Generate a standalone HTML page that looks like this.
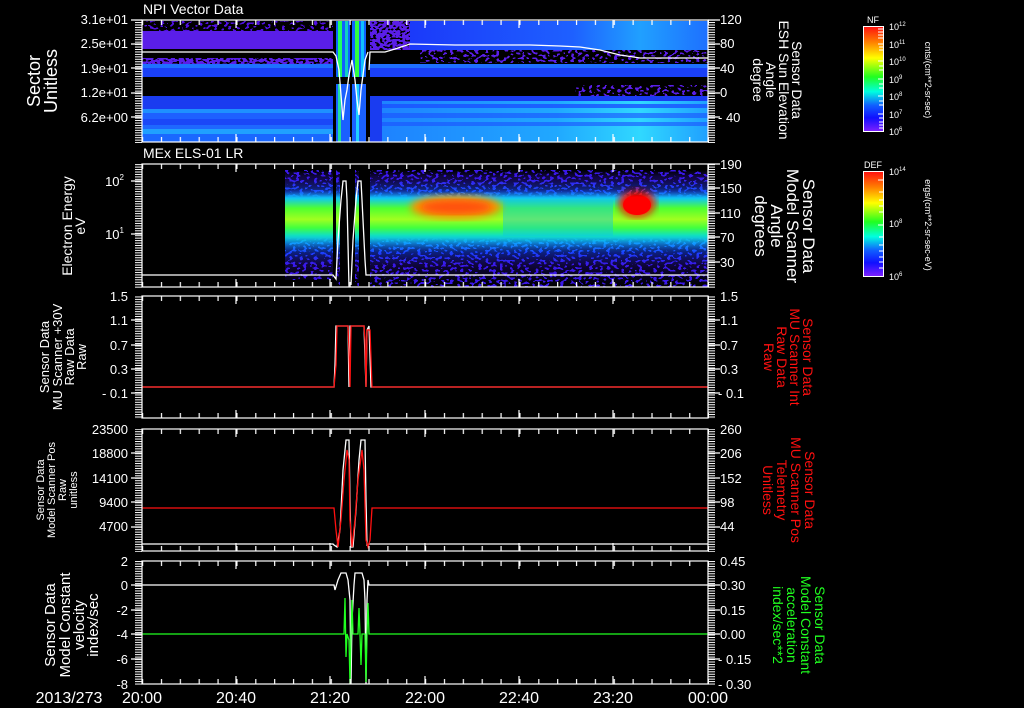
<!DOCTYPE html>
<html><head><meta charset="utf-8">
<style>
html,body{margin:0;padding:0;background:#000;}
svg{display:block;}
text{font-family:"Liberation Sans",sans-serif;fill:#fff;}
</style></head>
<body>
<svg width="1024" height="708" viewBox="0 0 1024 708" xmlns="http://www.w3.org/2000/svg">
<defs>
  <filter id="spk" x="0" y="0" width="100%" height="100%">
    <feTurbulence type="fractalNoise" baseFrequency="0.28 0.4" numOctaves="1" seed="3"/>
    <feComponentTransfer><feFuncA type="discrete" tableValues="0 0 0 1 1 1 1"/></feComponentTransfer>
    <feColorMatrix type="matrix" values="0 0 0 0 0  0 0 0 0 0  0 0 0 0 0  0 0 0 1 0"/>
  </filter>
  <filter id="spk2" x="0" y="0" width="100%" height="100%">
    <feTurbulence type="fractalNoise" baseFrequency="0.3 0.45" numOctaves="1" seed="7"/>
    <feComponentTransfer><feFuncA type="discrete" tableValues="0 0 0 0 1 1 1"/></feComponentTransfer>
    <feColorMatrix type="matrix" values="0 0 0 0 0  0 0 0 0 0  0 0 0 0 0  0 0 0 1 0"/>
  </filter>
  <filter id="blur2"><feGaussianBlur stdDeviation="4"/></filter>
  <linearGradient id="p2g" x1="0" y1="164" x2="0" y2="287" gradientUnits="userSpaceOnUse">
    <stop offset="0" stop-color="#3a18e8"/>
    <stop offset="0.12" stop-color="#3a18e8"/>
    <stop offset="0.22" stop-color="#1a50ff"/>
    <stop offset="0.28" stop-color="#10c8f0"/>
    <stop offset="0.36" stop-color="#50ff30"/>
    <stop offset="0.45" stop-color="#a0ff20"/>
    <stop offset="0.52" stop-color="#40ff40"/>
    <stop offset="0.58" stop-color="#10e0c0"/>
    <stop offset="0.64" stop-color="#10a0ff"/>
    <stop offset="0.72" stop-color="#1a40ff"/>
    <stop offset="0.82" stop-color="#3a18e8"/>
    <stop offset="1" stop-color="#3a18e8"/>
  </linearGradient>
  <linearGradient id="p2m" x1="0" y1="164" x2="0" y2="287" gradientUnits="userSpaceOnUse">
    <stop offset="0" stop-color="#fff"/>
    <stop offset="0.05" stop-color="#fff"/>
    <stop offset="0.1" stop-color="#bbb"/>
    <stop offset="0.2" stop-color="#888"/>
    <stop offset="0.27" stop-color="#000"/>
    <stop offset="0.6" stop-color="#000"/>
    <stop offset="0.7" stop-color="#777"/>
    <stop offset="0.85" stop-color="#ccc"/>
    <stop offset="1" stop-color="#fff"/>
  </linearGradient>
  <mask id="p2mask"><rect x="0" y="164" width="1024" height="123" fill="url(#p2m)"/></mask>
  <linearGradient id="cb" x1="0" y1="0" x2="0" y2="1">
    <stop offset="0" stop-color="#ff1010"/>
    <stop offset="0.15" stop-color="#ff8000"/>
    <stop offset="0.3" stop-color="#ffff00"/>
    <stop offset="0.48" stop-color="#20ff20"/>
    <stop offset="0.62" stop-color="#00ffe0"/>
    <stop offset="0.75" stop-color="#1060ff"/>
    <stop offset="0.87" stop-color="#1010ff"/>
    <stop offset="1" stop-color="#8020ff"/>
  </linearGradient>
  <linearGradient id="rfade" x1="370" y1="0" x2="708" y2="0" gradientUnits="userSpaceOnUse">
    <stop offset="0" stop-color="#1a30f8"/>
    <stop offset="0.6" stop-color="#1e60ff"/>
    <stop offset="0.8" stop-color="#20a0ff"/>
    <stop offset="1" stop-color="#1e70ff"/>
  </linearGradient>
  <linearGradient id="rfade2" x1="370" y1="0" x2="708" y2="0" gradientUnits="userSpaceOnUse">
    <stop offset="0" stop-color="#1e80ff"/>
    <stop offset="0.55" stop-color="#20a8ff"/>
    <stop offset="0.8" stop-color="#30d8ff"/>
    <stop offset="1" stop-color="#20a0ff"/>
  </linearGradient>
  <pattern id="xt" x="142" y="0" width="18.867" height="10" patternUnits="userSpaceOnUse">
    <rect x="0" y="0" width="1.2" height="10" fill="#fff"/>
  </pattern>
  <pattern id="yt" x="0" y="0" width="10" height="2.45" patternUnits="userSpaceOnUse">
    <rect x="0" y="0" width="10" height="1" fill="#fff"/>
  </pattern>
</defs>

<!-- ============ PANEL 1 ============ -->
<g>
  <rect x="142" y="21" width="191" height="10" fill="#5010e0"/>
  <rect x="142" y="21" width="191" height="10" filter="url(#spk)"/>
  <rect x="142" y="31" width="191" height="18" fill="#5a1ee8"/>
  <rect x="142" y="58" width="191" height="6" fill="#5a1ee8"/>
  <rect x="142" y="58" width="191" height="6" filter="url(#spk2)"/>
  <rect x="142" y="64" width="191" height="4" fill="#1e70ff"/>
  <rect x="142" y="68" width="191" height="9" fill="#1a40f8"/>
  <rect x="142" y="96" width="191" height="13" fill="#1a3cf0"/>
  <rect x="142" y="109" width="191" height="4" fill="#1e90ff"/>
  <rect x="142" y="113" width="191" height="6" fill="#1e60ff"/>
  <rect x="142" y="119" width="191" height="6" fill="#1a48f8"/>
  <rect x="142" y="125" width="191" height="4" fill="#1e68ff"/>
  <rect x="142" y="129" width="191" height="5" fill="#20a0ff"/>
  <rect x="142" y="134" width="191" height="8" fill="#1a68ff"/>
  <rect x="370" y="21" width="338" height="29" fill="url(#rfade)"/>
  <rect x="370" y="21" width="40" height="29" fill="#5a1ee8"/>
  <rect x="370" y="21" width="40" height="29" filter="url(#spk2)"/>
  <rect x="420" y="50" width="288" height="13" fill="#5a1ee8"/>
  <rect x="420" y="50" width="288" height="13" filter="url(#spk)"/>
  <rect x="370" y="64" width="338" height="4" fill="#1e70ff"/>
  <rect x="370" y="68" width="338" height="9" fill="#1a40f8"/>
  <rect x="575" y="85" width="133" height="11" fill="#5a1ee8"/>
  <rect x="575" y="85" width="133" height="11" filter="url(#spk)"/>
  <rect x="370" y="96" width="338" height="46" fill="url(#rfade2)"/>
  <rect x="370" y="96" width="338" height="5" fill="#1a3cf0"/>
  <rect x="370" y="104" width="338" height="4" fill="#1a50ff" opacity="0.8"/>
  <rect x="370" y="113" width="338" height="5" fill="#1a50ff" opacity="0.6"/>
  <rect x="370" y="122" width="338" height="4" fill="#1a50ff" opacity="0.6"/>
  <rect x="370" y="96" width="12" height="46" fill="#1a3cf0"/>
  <rect x="336" y="21" width="30" height="56" fill="#1060ff"/>
  <rect x="338" y="21" width="4" height="56" fill="#20ff60"/>
  <rect x="345" y="21" width="3" height="56" fill="#10d0c0"/>
  <rect x="355" y="21" width="4" height="56" fill="#30ff40"/>
  <rect x="361" y="21" width="3" height="56" fill="#10c0ff"/>
  <rect x="336" y="84" width="30" height="58" fill="#1a60ff"/>
  <rect x="338" y="84" width="3" height="58" fill="#20e0a0"/>
  <rect x="356" y="84" width="3" height="58" fill="#20d0ff"/>
  <rect x="333" y="21" width="3" height="121" fill="#000"/>
  <rect x="350" y="21" width="2" height="121" fill="#000"/>
  <rect x="366" y="21" width="4" height="121" fill="#000"/>
  <polyline fill="none" stroke="#fff" stroke-width="1.3" points="142,52 333,52 336,56 339,70 341,95 343,120 345,100 347,90 349,75 352,60 355,80 357,100 359,115 361,90 363,75 365,60 368,52"/>
  <polyline fill="none" stroke="#fff" stroke-width="1.3" points="369,70 370,52 385,52 395,49 410,44 455,45 530,45 560,46 580,47 600,50 620,55 640,58 708,58"/>
</g>

<!-- ============ PANEL 2 ============ -->
<g>
  <rect x="285" y="170" width="48" height="110" fill="url(#p2g)"/>
  <rect x="370" y="170" width="338" height="117" fill="url(#p2g)"/>
  <rect x="336" y="170" width="4" height="117" fill="url(#p2g)"/>
  <rect x="355" y="170" width="4" height="117" fill="url(#p2g)"/>
  <rect x="503" y="200" width="110" height="36" fill="#10c8e0" opacity="0.45"/>
  <ellipse cx="456" cy="207" rx="46" ry="12" fill="#ff9000" filter="url(#blur2)"/>
  <ellipse cx="456" cy="207" rx="36" ry="7" fill="#ff5010" filter="url(#blur2)"/>
  <ellipse cx="637" cy="203" rx="18" ry="14" fill="#ff1000" filter="url(#blur2)"/>
  <ellipse cx="637" cy="205" rx="14" ry="10" fill="#ff0000"/>
  <rect x="142" y="164" width="566" height="123" filter="url(#spk)" mask="url(#p2mask)"/>
  <polyline fill="none" stroke="#fff" stroke-width="1.3" points="142,275 333,275 336,279 338,240 341,200 343,181 346,181 347,200 349,287"/>
  <polyline fill="none" stroke="#fff" stroke-width="1.3" points="351,285 353,240 356,200 358,181 361,181 362,200 365,260 366,275 708,275"/>
</g>

<!-- ============ PANEL 3 ============ -->
<polyline fill="none" stroke="#fff" stroke-width="1.3" points="142,387 334,387 335,365 336,326 348,326 349,387 350,326 364,326 366,387 367,330 369,326 371,387 708,387"/>
<polyline fill="none" stroke="#ff1010" stroke-width="1.3" points="142,387 334,387 336,365 337,326 348,326 349,350 350,387 351,326 364,326 365,340 366,387 367,330 370,330 372,387 708,387"/>

<!-- ============ PANEL 4 ============ -->
<polyline fill="none" stroke="#fff" stroke-width="1.3" points="142,544 333,544 334,545 337,547 340,530 343,470 346,440 349,440 350,500 351,547 353,547 356,510 359,460 361,440 365,440 366,500 367,545 369,544 708,544"/>
<polyline fill="none" stroke="#ff1010" stroke-width="1.3" points="142,508 334,508 336,530 338,547 341,520 344,480 347,450 349,460 350,520 352,547 355,520 358,480 362,450 364,470 366,540 368,547 370,540 372,508 708,508"/>

<!-- ============ PANEL 5 ============ -->
<polyline fill="none" stroke="#fff" stroke-width="1.3" points="142,585 334,585 335,590 338,580 341,573 346,573 348,580 350,600 351,684 352,620 354,585 355,573 362,573 364,580 365,600 366,684 367,600 368,580 369,585 708,585"/>
<polyline fill="none" stroke="#20ff20" stroke-width="1.3" points="142,634 344,634 345,598 346,657 347,634 349,640 350,684 351,634 352,600 353,634 358,634 359,608 360,634 361,665 362,634 365,634 366,682 367,634 368,603 369,634 708,634"/>

<!-- ============ AXES ============ -->
<g fill="none" stroke="#fff" stroke-width="1.2">
  <rect x="142" y="20" width="566" height="122"/>
  <rect x="142" y="164" width="566" height="123"/>
  <rect x="142" y="296" width="566" height="122"/>
  <rect x="142" y="429" width="566" height="122"/>
  <rect x="142" y="561" width="566" height="123"/>
</g>
<g>
  <rect x="142" y="20" width="567" height="5" fill="url(#xt)"/><rect x="142" y="137" width="567" height="5" fill="url(#xt)"/>
  <rect x="142" y="164" width="567" height="5" fill="url(#xt)"/><rect x="142" y="282" width="567" height="5" fill="url(#xt)"/>
  <rect x="142" y="296" width="567" height="5" fill="url(#xt)"/><rect x="142" y="413" width="567" height="5" fill="url(#xt)"/>
  <rect x="142" y="429" width="567" height="5" fill="url(#xt)"/><rect x="142" y="546" width="567" height="5" fill="url(#xt)"/>
  <rect x="142" y="561" width="567" height="5" fill="url(#xt)"/><rect x="142" y="679" width="567" height="5" fill="url(#xt)"/>
</g>
<g stroke="#fff" stroke-width="1.2">
  <path d="M236,20v8M330,20v8M425,20v8M519,20v8M613,20v8M236,142v-8M330,142v-8M425,142v-8M519,142v-8M613,142v-8"/>
  <path d="M236,164v8M330,164v8M425,164v8M519,164v8M613,164v8M236,287v-8M330,287v-8M425,287v-8M519,287v-8M613,287v-8"/>
  <path d="M236,296v8M330,296v8M425,296v8M519,296v8M613,296v8M236,418v-8M330,418v-8M425,418v-8M519,418v-8M613,418v-8"/>
  <path d="M236,429v8M330,429v8M425,429v8M519,429v8M613,429v8M236,551v-8M330,551v-8M425,551v-8M519,551v-8M613,551v-8"/>
  <path d="M236,561v8M330,561v8M425,561v8M519,561v8M613,561v8M236,684v-8M330,684v-8M425,684v-8M519,684v-8M613,684v-8"/>
</g>
<g>
  <rect x="135" y="20" width="7" height="123" fill="url(#yt)"/><rect x="708" y="20" width="7" height="123" fill="url(#yt)"/>
  <rect x="135" y="164" width="7" height="124" fill="url(#yt)"/><rect x="708" y="164" width="7" height="124" fill="url(#yt)"/>
  <rect x="135" y="296" width="7" height="123" fill="url(#yt)"/><rect x="708" y="296" width="7" height="123" fill="url(#yt)"/>
  <rect x="135" y="429" width="7" height="123" fill="url(#yt)"/><rect x="708" y="429" width="7" height="123" fill="url(#yt)"/>
  <rect x="135" y="561" width="7" height="124" fill="url(#yt)"/><rect x="708" y="561" width="7" height="124" fill="url(#yt)"/>
</g>
<g stroke="#fff" stroke-width="1.2">
  <path d="M131,20h11M131,44h11M131,68h11M131,93h11M131,117h11M708,20h12M708,44h12M708,68h12M708,93h12M708,117h12"/>
  <path d="M131,181h11M131,234h11M708,164h12M708,188h12M708,213h12M708,237h12M708,262h12"/>
  <path d="M131,320h11M131,345h11M131,369h11M131,393h11M708,320h12M708,345h12M708,369h12M708,393h12"/>
  <path d="M131,453h11M131,478h11M131,502h11M131,527h11M708,453h12M708,478h12M708,502h12M708,527h12"/>
  <path d="M131,585h11M131,610h11M131,634h11M131,659h11M708,585h12M708,610h12M708,634h12M708,659h12"/>
</g>

<g font-size="13" text-anchor="end">
  <text x="128" y="24">3.1e+01</text><text x="128" y="48">2.5e+01</text><text x="128" y="73">1.9e+01</text><text x="128" y="97">1.2e+01</text><text x="128" y="122">6.2e+00</text>
  <text x="124" y="186">10<tspan font-size="8" dy="-6">2</tspan></text>
  <text x="124" y="239">10<tspan font-size="8" dy="-6">1</tspan></text>
  <text x="128" y="301">1.5</text><text x="128" y="325">1.1</text><text x="128" y="350">0.7</text><text x="128" y="374">0.3</text><text x="128" y="398">- 0.1</text>
  <text x="128" y="434">23500</text><text x="128" y="458">18800</text><text x="128" y="483">14100</text><text x="128" y="507">9400</text><text x="128" y="531">4700</text>
  <text x="128" y="566">2</text><text x="128" y="590">0</text><text x="128" y="615">-2</text><text x="128" y="639">-4</text><text x="128" y="664">-6</text><text x="128" y="689">-8</text>
</g>
<g font-size="13" text-anchor="start">
  <text x="720" y="24">120</text><text x="720" y="48">80</text><text x="720" y="73">40</text><text x="720" y="97">0</text><text x="718" y="122">- 40</text>
  <text x="720" y="169">190</text><text x="720" y="193">150</text><text x="720" y="218">110</text><text x="720" y="242">70</text><text x="720" y="267">30</text>
  <text x="720" y="301">1.5</text><text x="720" y="325">1.1</text><text x="720" y="350">0.7</text><text x="720" y="374">0.3</text><text x="718" y="398">- 0.1</text>
  <text x="720" y="434">260</text><text x="720" y="458">206</text><text x="720" y="483">152</text><text x="720" y="507">98</text><text x="720" y="531">44</text>
  <text x="720" y="566">0.45</text><text x="720" y="590">0.30</text><text x="720" y="615">0.15</text><text x="720" y="639">0.00</text><text x="718" y="664">- 0.15</text><text x="718" y="689">- 0.30</text>
</g>
<g font-size="16" text-anchor="middle">
  <text x="69" y="703">2013/273</text>
  <text x="142" y="703">20:00</text><text x="236" y="703">20:40</text><text x="330" y="703">21:20</text><text x="425" y="703">22:00</text><text x="519" y="703">22:40</text><text x="613" y="703">23:20</text><text x="708" y="703">00:00</text>
</g>
<text x="143" y="14" font-size="14">NPI Vector Data</text>
<text x="143" y="158" font-size="14">MEx ELS-01 LR</text>

<g text-anchor="middle">
  <text transform="translate(40,81) rotate(-90)" font-size="18">Sector</text>
  <text transform="translate(57,81) rotate(-90)" font-size="18">Unitless</text>
  <text transform="translate(72,226) rotate(-90)" font-size="14">Electron Energy</text>
  <text transform="translate(85,226) rotate(-90)" font-size="14">eV</text>
  <text transform="translate(49,357) rotate(-90)" font-size="13">Sensor Data</text>
  <text transform="translate(62,357) rotate(-90)" font-size="13">MU Scanner +30V</text>
  <text transform="translate(74,357) rotate(-90)" font-size="13">Raw Data</text>
  <text transform="translate(86,357) rotate(-90)" font-size="13">Raw</text>
  <text transform="translate(44,490) rotate(-90)" font-size="11">Sensor Data</text>
  <text transform="translate(55,490) rotate(-90)" font-size="11">Model Scanner Pos</text>
  <text transform="translate(66,490) rotate(-90)" font-size="11">Raw</text>
  <text transform="translate(77,490) rotate(-90)" font-size="11">unitless</text>
  <text transform="translate(55,625) rotate(-90)" font-size="15">Sensor Data</text>
  <text transform="translate(70,625) rotate(-90)" font-size="15">Model Constant</text>
  <text transform="translate(84,625) rotate(-90)" font-size="15">velocity</text>
  <text transform="translate(98,625) rotate(-90)" font-size="15">index/sec</text>
</g>
<g text-anchor="middle">
  <text transform="translate(792,80) rotate(90)" font-size="14">Sensor Data</text>
  <text transform="translate(779,80) rotate(90)" font-size="14">ESH Sun Elevation</text>
  <text transform="translate(766,80) rotate(90)" font-size="14">Angle</text>
  <text transform="translate(753,80) rotate(90)" font-size="14">degree</text>
  <text transform="translate(803,226) rotate(90)" font-size="17">Sensor Data</text>
  <text transform="translate(787,226) rotate(90)" font-size="17">Model Scanner</text>
  <text transform="translate(771,226) rotate(90)" font-size="17">Angle</text>
  <text transform="translate(755,226) rotate(90)" font-size="17">degrees</text>
</g>
<g text-anchor="middle">
  <text transform="translate(803,357) rotate(90)" font-size="14" fill="#ff1010" style="fill:#ff1010">Sensor Data</text>
  <text transform="translate(790,357) rotate(90)" font-size="14" style="fill:#ff1010">MU Scanner Int</text>
  <text transform="translate(777,357) rotate(90)" font-size="14" style="fill:#ff1010">Raw Data</text>
  <text transform="translate(764,357) rotate(90)" font-size="14" style="fill:#ff1010">Raw</text>
  <text transform="translate(805,490) rotate(90)" font-size="14" style="fill:#ff1010">Sensor Data</text>
  <text transform="translate(791,490) rotate(90)" font-size="14" style="fill:#ff1010">MU Scanner Pos</text>
  <text transform="translate(777,490) rotate(90)" font-size="14" style="fill:#ff1010">Telemetry</text>
  <text transform="translate(763,490) rotate(90)" font-size="14" style="fill:#ff1010">Unitless</text>
</g>
<g text-anchor="middle">
  <text transform="translate(815,625) rotate(90)" font-size="14" style="fill:#20ff20">Sensor Data</text>
  <text transform="translate(801,625) rotate(90)" font-size="14" style="fill:#20ff20">Model Constant</text>
  <text transform="translate(787,625) rotate(90)" font-size="14" style="fill:#20ff20">acceleration</text>
  <text transform="translate(773,625) rotate(90)" font-size="14" style="fill:#20ff20">index/sec**2</text>
</g>

<rect x="863.5" y="26.5" width="20" height="105" fill="url(#cb)" stroke="#fff" stroke-width="1"/>
<rect x="863.5" y="171.5" width="20" height="105" fill="url(#cb)" stroke="#fff" stroke-width="1"/>
<g stroke="#fff" stroke-width="1">
  <path d="M878,29h5M878,32h5M878,35h5M878,38h5M878,44h5M879,47h4M879,50h4M878,61h5M879,66h4M879,70h4M878,79h5M879,84h4M879,88h4M878,96h5M879,101h4M879,105h4M878,114h5M879,118h4M879,122h4M879,125h4M879,128h4"/>
  <path d="M878,180h5M879,192h4M879,200h4M879,206h4M879,212h4M878,225h5M879,237h4M879,245h4M879,251h4M879,257h4M879,262h4M879,268h4"/>
</g>
<text x="873" y="23" font-size="9" text-anchor="middle">NF</text>
<text x="873" y="168" font-size="9" text-anchor="middle">DEF</text>
<g font-size="9">
  <text x="889" y="30">10<tspan font-size="6" dy="-4">12</tspan></text>
  <text x="889" y="48">10<tspan font-size="6" dy="-4">11</tspan></text>
  <text x="889" y="65">10<tspan font-size="6" dy="-4">10</tspan></text>
  <text x="889" y="83">10<tspan font-size="6" dy="-4">9</tspan></text>
  <text x="889" y="100">10<tspan font-size="6" dy="-4">8</tspan></text>
  <text x="889" y="118">10<tspan font-size="6" dy="-4">7</tspan></text>
  <text x="889" y="135">10<tspan font-size="6" dy="-4">6</tspan></text>
  <text x="889" y="175">10<tspan font-size="6" dy="-4">14</tspan></text>
  <text x="889" y="227">10<tspan font-size="6" dy="-4">8</tspan></text>
  <text x="889" y="280">10<tspan font-size="6" dy="-4">6</tspan></text>
</g>
<text transform="translate(925,80) rotate(90)" font-size="9" text-anchor="middle">cnts/(cm**2-sr-sec)</text>
<text transform="translate(925,225) rotate(90)" font-size="9" text-anchor="middle">ergs/(cm**2-sr-sec-eV)</text>
</svg>
</body></html>
